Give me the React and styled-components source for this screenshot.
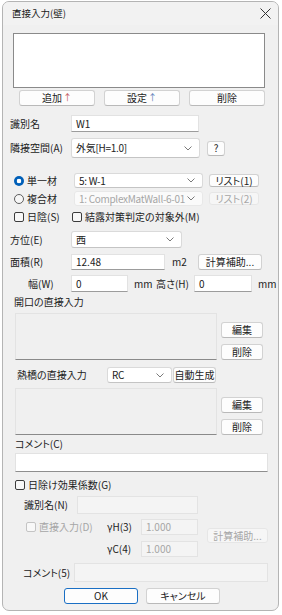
import React from 'react'
import styled, { createGlobalStyle } from 'styled-components'

const GlobalStyle = createGlobalStyle`
  html, body {
    margin: 0;
    padding: 0;
    background: #ffffff;
  }
  body {
    font-family: "Noto Sans CJK JP", "Noto Sans", sans-serif;
    font-size: 10px;
    font-feature-settings: "palt";
    color: #222222;
  }
  * {
    box-sizing: border-box;
  }
`

const Window = styled.div`
  margin: 1px 0 0 2px;
  width: 277px;
  height: 610px;
  border: 1px solid #b4b4b4;
  border-radius: 7px;
  background: #f0f0f0;
  overflow: hidden;
  line-height: 1.2;
`

const TitleBar = styled.div`
  height: 23px;
  display: flex;
  align-items: center;
  justify-content: space-between;
  padding: 0 7px 0 9px;
  background: #f2f2f2;
  font-size: 9.5px;
  font-feature-settings: normal;
  color: #1a1a1a;
`

const Row = styled.div`
  display: flex;
  align-items: center;
  height: ${p => p.$h}px;
  margin-top: ${p => p.$top}px;
  padding-left: ${p => p.$indent || 0}px;
`

const Label = styled.span`
  flex: none;
  white-space: nowrap;
  width: ${p => (p.$w ? p.$w + 'px' : 'auto')};
  margin-left: ${p => p.$ml || 0}px;
  color: ${p => (p.$disabled ? '#a6a6a6' : '#222222')};
`

const ListBox = styled.div`
  margin: 8px 0 0 10px;
  width: 252px;
  height: 55px;
  background: #ffffff;
  border: 1px solid #8a8a8a;
`

const TextBox = styled.div`
  flex: none;
  width: ${p => p.$w}px;
  height: ${p => (p.$h ? p.$h + 'px' : '100%')};
  margin-left: ${p => p.$ml || 0}px;
  display: flex;
  align-items: center;
  padding-left: 4px;
  white-space: nowrap;
  background: ${p => (p.$disabled ? '#f4f4f4' : '#ffffff')};
  border: 1px solid ${p => (p.$disabled ? '#e3e3e3' : '#e2e2e2')};
  border-bottom-color: ${p => (p.$disabled ? '#e3e3e3' : '#9c9c9c')};
  color: ${p => (p.$disabled ? '#a6a6a6' : '#222222')};
`

const Button = styled.div`
  flex: none;
  width: ${p => p.$w}px;
  height: ${p => p.$h || 16}px;
  margin-left: ${p => p.$ml || 0}px;
  margin-top: ${p => p.$mt || 0}px;
  display: flex;
  align-items: center;
  justify-content: center;
  white-space: nowrap;
  border-radius: 3px;
  background: ${p => (p.$disabled ? '#f6f6f6' : '#fdfdfd')};
  border: 1px solid ${p => (p.$default ? '#1a6fc4' : p.$disabled ? '#e6e6e6' : '#d2d2d2')};
  border-bottom-color: ${p => (p.$default ? '#1a6fc4' : p.$disabled ? '#e6e6e6' : '#b9b9b9')};
  color: ${p => (p.$disabled ? '#a6a6a6' : '#222222')};
`

const Arrow = styled.span`
  font-size: 9px;
  margin-left: 1px;
  color: ${p => p.$tone};
`

const SelectBox = styled.div`
  flex: none;
  width: ${p => p.$w}px;
  height: 100%;
  display: flex;
  align-items: center;
  justify-content: space-between;
  padding: 0 7px 0 4px;
  white-space: nowrap;
  border-radius: 3px;
  background: ${p => (p.$disabled ? '#fafafa' : '#ffffff')};
  border: 1px solid ${p => (p.$disabled ? '#e8e8e8' : '#dadada')};
  border-bottom-color: ${p => (p.$disabled ? '#e8e8e8' : '#c4c4c4')};
  color: ${p => (p.$disabled ? '#a6a6a6' : '#222222')};
`

const SelectText = styled.span`
  letter-spacing: -0.3px;
`

const ButtonRow = styled.div`
  display: flex;
  gap: 9px;
  margin-top: 2px;
  padding-left: 16px;
`

const Radio = styled.span`
  flex: none;
  width: 10px;
  height: 10px;
  margin-right: 3px;
  border-radius: 50%;
  ${p =>
    p.$checked
      ? 'background: radial-gradient(circle, #ffffff 0 2px, #005fb8 2.6px);'
      : 'border: 1px solid #5e5e5e; background: #f7f7f7;'}
`

const CheckBox = styled.span`
  flex: none;
  width: 10px;
  height: 10px;
  margin-right: 3px;
  border-radius: 2px;
  background: #f8f8f8;
  border: 1px solid ${p => (p.$disabled ? '#c4c4c4' : '#3c3c3c')};
`

const ListBlock = styled.div`
  display: flex;
  margin-top: 5px;
  padding-left: 12px;
`

const Sunken = styled.div`
  width: 202px;
  height: 47px;
  background: #f0f0f0;
  border: 1px solid #e3e3e3;
  border-bottom-color: #8a8a8a;
`

const SideButtons = styled.div`
  display: flex;
  flex-direction: column;
  gap: 6px;
  margin-left: 4px;
  padding-top: 9px;
`

const Gap = styled.div`
  height: ${p => p.$h}px;
`

const WideBox = styled.div`
  margin-left: 12px;
  width: 253px;
  height: 19px;
  background: #ffffff;
  border: 1px solid #e2e2e2;
  border-bottom-color: #8e8e8e;
`

const GammaBlock = styled.div`
  display: flex;
  align-items: flex-start;
  margin-top: 5px;
`

const GammaGrid = styled.div`
  display: grid;
  grid-template-columns: 81px 34px 57px;
  grid-auto-rows: 16px;
  row-gap: 6px;
  align-items: center;
  padding-left: 23px;
`

const CheckLabel = styled.div`
  display: flex;
  align-items: center;
`

const Chevron = () => (
  <svg width="8" height="5" viewBox="0 0 8 5">
    <polyline points="0.5,0.5 4,4 7.5,0.5" fill="none" stroke="#7a7a7a" strokeWidth="1" />
  </svg>
)

const CloseIcon = () => (
  <svg width="11" height="11" viewBox="0 0 11 11">
    <line x1="0.5" y1="0.5" x2="10.5" y2="10.5" stroke="#333" strokeWidth="1" />
    <line x1="10.5" y1="0.5" x2="0.5" y2="10.5" stroke="#333" strokeWidth="1" />
  </svg>
)

const Select = ({ w, disabled, children }) => (
  <SelectBox $w={w} $disabled={disabled}>
    <SelectText>{children}</SelectText>
    <Chevron />
  </SelectBox>
)

export default function App() {
  return (
    <>
      <GlobalStyle />
      <Window>
        <TitleBar>
          <span>直接入力(壁)</span>
          <CloseIcon />
        </TitleBar>

        <ListBox />

        <ButtonRow>
          <Button $w={76}>追加<Arrow $tone="#c2575a">↑</Arrow></Button>
          <Button $w={76}>設定<Arrow $tone="#5c7fb8">↑</Arrow></Button>
          <Button $w={76}>削除</Button>
        </ButtonRow>

        <Row $top={9} $h={17} $indent={7}>
          <Label $w={61}>識別名</Label>
          <TextBox $w={128}>W1</TextBox>
        </Row>

        <Row $top={6} $h={20} $indent={7}>
          <Label $w={61}>隣接空間(A)</Label>
          <Select w={129}>外気[H=1.0]</Select>
          <Button $w={18} $h={15} $ml={7}>?</Button>
        </Row>

        <Row $top={15} $h={15} $indent={11}>
          <Radio $checked />
          <Label $w={47}>単一材</Label>
          <Select w={129}>5: W-1</Select>
          <Button $w={50} $h={13} $ml={6}>リスト(1)</Button>
        </Row>

        <Row $top={3} $h={15} $indent={11}>
          <Radio />
          <Label $w={47}>複合材</Label>
          <Select w={129} disabled>1: ComplexMatWall-6-01</Select>
          <Button $w={50} $h={13} $ml={6} $disabled>リスト(2)</Button>
        </Row>

        <Row $top={4} $h={13} $indent={11}>
          <CheckBox />
          <Label $w={45}>日陰(S)</Label>
          <CheckBox />
          <Label>結露対策判定の対象外(M)</Label>
        </Row>

        <Row $top={8} $h={17} $indent={7}>
          <Label $w={61}>方位(E)</Label>
          <Select w={111}>西</Select>
        </Row>

        <Row $top={5} $h={18} $indent={7}>
          <Label $w={61}>面積(R)</Label>
          <TextBox $w={94} $h={16}>12.48</TextBox>
          <Label $w={26} $ml={7}>m2</Label>
          <Button $w={64}>計算補助...</Button>
        </Row>

        <Row $top={4} $h={17} $indent={25}>
          <Label $w={43}>幅(W)</Label>
          <TextBox $w={57}>0</TextBox>
          <Label $w={22} $ml={6}>mm</Label>
          <Label $w={38}>高さ(H)</Label>
          <TextBox $w={58}>0</TextBox>
          <Label $ml={6}>mm</Label>
        </Row>

        <Row $top={4} $h={12} $indent={11}>
          <Label>開口の直接入力</Label>
        </Row>

        <ListBlock>
          <Sunken />
          <SideButtons>
            <Button $w={42}>編集</Button>
            <Button $w={42}>削除</Button>
          </SideButtons>
        </ListBlock>

        <Row $top={7} $h={16} $indent={14}>
          <Label $w={90}>熱橋の直接入力</Label>
          <Select w={65}>RC</Select>
          <Button $w={43} $ml={1}>自動生成</Button>
        </Row>

        <ListBlock>
          <Sunken />
          <SideButtons>
            <Button $w={42}>編集</Button>
            <Button $w={42}>削除</Button>
          </SideButtons>
        </ListBlock>

        <Row $top={3} $h={12} $indent={12}>
          <Label>コメント(C)</Label>
        </Row>
        <Gap $h={3} />
        <WideBox />

        <Row $top={6} $h={14} $indent={12}>
          <CheckBox />
          <Label>日除け効果係数(G)</Label>
        </Row>

        <Row $top={4} $h={18} $indent={21}>
          <Label $w={53}>識別名(N)</Label>
          <TextBox $w={121} $disabled />
        </Row>

        <GammaBlock>
          <GammaGrid>
            <CheckLabel>
              <CheckBox $disabled />
              <Label $disabled>直接入力(D)</Label>
            </CheckLabel>
            <Label>γH(3)</Label>
            <TextBox $w={57} $h={16} $disabled>1.000</TextBox>
            <span />
            <Label>γC(4)</Label>
            <TextBox $w={57} $h={16} $disabled>1.000</TextBox>
          </GammaGrid>
          <Button $w={61} $h={15} $ml={9} $mt={9} $disabled>計算補助...</Button>
        </GammaBlock>

        <Row $top={6} $h={19} $indent={20}>
          <Label $w={51}>コメント(5)</Label>
          <TextBox $w={194} $disabled />
        </Row>

        <Row $top={6} $h={16} $indent={61}>
          <Button $w={74} $default>OK</Button>
          <Button $w={74} $ml={8}>キャンセル</Button>
        </Row>
      </Window>
    </>
  )
}
